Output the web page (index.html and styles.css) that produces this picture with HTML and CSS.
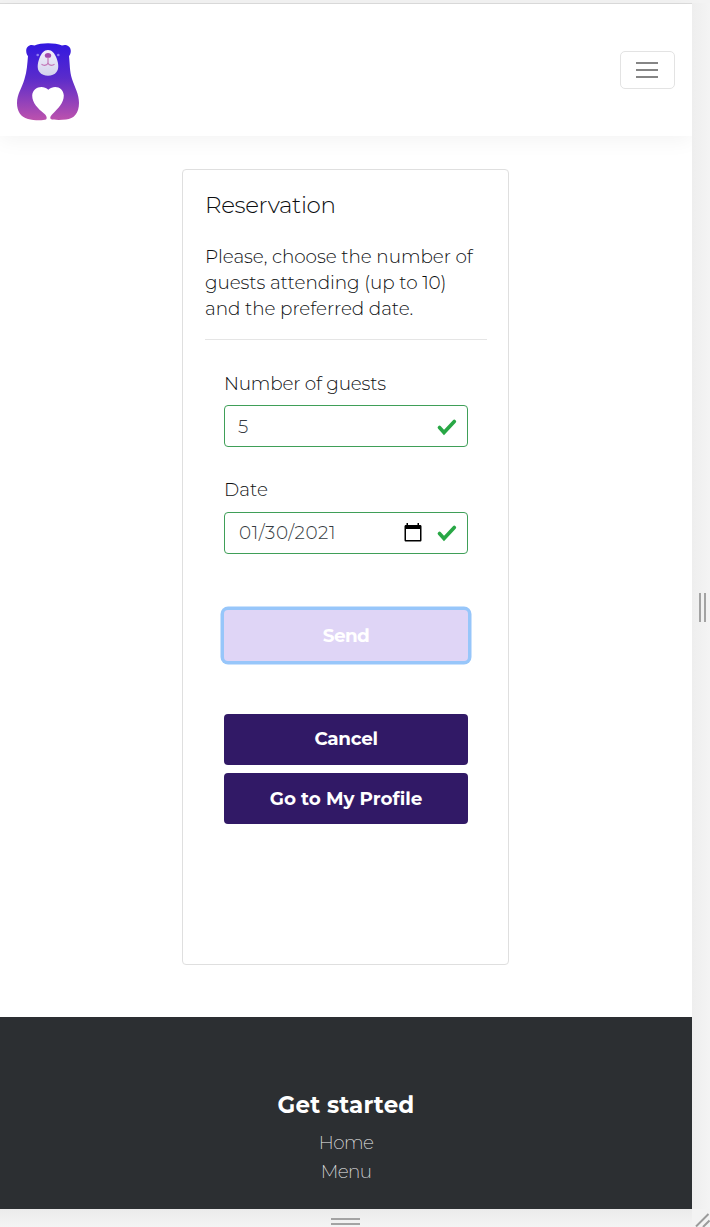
FILE: index.html
```
<!DOCTYPE html>
<html lang="en">
<head>
<meta charset="utf-8">
<title>Reservation</title>
<link rel="stylesheet" href="styles.css">
</head>
<body>
<div class="frame">
  <div class="screen">
    <header class="navbar">
      <svg class="logo" width="64" height="80" viewBox="0 0 64 80">
        <defs>
          <linearGradient id="fur" x1="0" y1="0" x2="0" y2="1">
            <stop offset="0" stop-color="#3218e0"/>
            <stop offset=".45" stop-color="#5a2bcb"/>
            <stop offset="1" stop-color="#bd52ad"/>
          </linearGradient>
          <linearGradient id="face" x1="0" y1="0" x2="0" y2="1">
            <stop offset="0" stop-color="#f2effb"/>
            <stop offset="1" stop-color="#d3d3ec"/>
          </linearGradient>
        </defs>
        <path fill="url(#fur)" d="M18.500 3.500C25 .4 39 .4 46 3.500C50.500 1.800 54.900 4.500 54.800 9C54.700 11.500 54 13 53 14C54 23 53.500 29 56 37C59 46 63 52 63 61C63 71 58 77 50 77.500C44 78.200 37 78 34.700 77C33.500 75.500 35 73.500 36.500 72C42 66.500 47.800 61 47.800 53.500C47.500 45.500 38.500 42 32.300 47.800C26.500 42 16.500 45.500 16.200 53.500C16.200 61 22 66.500 28 71.500C30.500 73.500 31.500 76 30 77.500C27 78.800 17 78.500 12 77C4.500 75 1 69 1 61C1 52 6 46 8.500 37C11 29 11.300 22 12 14C11 13 10.300 11.500 10.200 9C10.100 4.500 14 1.800 18.500 3.500Z"/>
        <path fill="url(#face)" d="M32 8C36 8 38.500 11 40.500 16C42.800 22 43 27 40.500 30C37 35 27 35 23.500 30C21 27 21.200 22 23.500 16C25.500 11 28 8 32 8Z"/>
        <ellipse cx="32" cy="13.500" rx="3.200" ry="2.500" fill="#a34aae"/>
        <path d="M32 15V20.500M25.500 22.300C28 24 31.500 23.500 32 20.500C32.500 23.500 36 24 38.500 22.300" fill="none" stroke="#c479b8" stroke-width="1.200"/>
        <circle cx="21.700" cy="13" r="1.300" fill="#8f80f0"/>
        <circle cx="42.300" cy="13" r="1.300" fill="#8f80f0"/>
      </svg>
      <button class="toggler" aria-label="Toggle navigation">
        <span class="toggler-bar"></span><span class="toggler-bar"></span><span class="toggler-bar"></span>
      </button>
    </header>
    <main class="content">
      <section class="card">
        <h1 class="card-title">Reservation</h1>
        <p class="card-text">Please, choose the number of<br>guests attending (up to 10)<br>and the preferred date.</p>
        <form class="form">
          <div class="field">
            <div class="label label-guests">Number of guests</div>
            <div class="control control-guests">
              <span class="value">5</span>
              <svg class="check" width="20" height="18" viewBox="0 0 20 18"><path d="M2.500 9.500L7 14.500L17.300 3.500" fill="none" stroke="#28a745" stroke-width="3.600" stroke-linecap="round"/></svg>
            </div>
          </div>
          <div class="field">
            <div class="label label-date">Date</div>
            <div class="control">
              <span class="value value-date">01/30/2021</span>
              <svg class="calendar" width="18" height="20" viewBox="0 0 18 20"><path fill="#000" fill-rule="evenodd" d="M2.500 0H4V2H13.500V0H15V2H16C17 2 17.500 2.500 17.500 3.500V17C17.500 18 17 18.500 16 18.500H2C1 18.500 .5 18 .5 17V3.500C.5 2.500 1 2 2 2H2.500ZM2 6V17H16V6Z"/></svg>
              <svg class="check" width="20" height="18" viewBox="0 0 20 18"><path d="M2.500 9.500L7 14.500L17.300 3.500" fill="none" stroke="#28a745" stroke-width="3.600" stroke-linecap="round"/></svg>
            </div>
          </div>
          <button type="button" class="btn btn-send">Send</button>
          <button type="button" class="btn btn-dark btn-cancel">Cancel</button>
          <button type="button" class="btn btn-dark btn-profile">Go to My Profile</button>
        </form>
      </section>
    </main>
    <footer class="footer">
      <h2 class="footer-title">Get started</h2>
      <a class="footer-link">Home</a>
      <a class="footer-link">Menu</a>
    </footer>
  </div>
  <div class="rail-right"><span class="grip grip-v"></span></div>
  <div class="rail-bottom"><span class="grip grip-h"></span></div>
  <div class="corner"><svg width="18" height="18" viewBox="0 0 18 18"><path d="M4 17.500L16.500 5M11 18L17.500 11.500" stroke="#9b9b9b" stroke-width="2" fill="none"/></svg></div>
</div>
</body>
</html>
```
FILE: styles.css
```
* { box-sizing: border-box; }
body {
  margin: 0;
  background: #f3f3f3;
  color: #0c0e10;
  font-family: Montserrat, Inter, "Open Sans", sans-serif;
  font-size: 18.400px;
  font-weight: 300;
}
.frame {
  display: grid;
  grid-template-columns: 692px 18px;
  grid-template-rows: 1206px 18px;
  height: 1227px;
  padding-top: 3px;
  overflow: hidden;
}
.screen {
  display: flex;
  flex-direction: column;
  background: #fff;
  border-top: 1px solid #dcdcdc;
}
.navbar {
  display: flex;
  justify-content: space-between;
  align-items: flex-start;
  height: 132px;
  padding: 38px 17px 0 16px;
  box-shadow: 0 4px 20px rgba(0, 0, 0, .05);
}
.logo { display: block; }
.toggler {
  display: flex;
  flex-direction: column;
  align-items: center;
  justify-content: center;
  gap: 5px;
  width: 55px;
  height: 38px;
  margin-top: 9px;
  padding: 0 1px 0 0;
  background: #fff;
  border: 1px solid #e3e3e3;
  border-radius: 5px;
}
.toggler-bar { width: 22px; height: 2px; background: #858585; }
.content { height: 881px; padding-top: 33px; }
.card {
  width: 327px;
  height: 796px;
  margin-left: 182px;
  padding: 20px 21px 0 22px;
  border: 1px solid #dfdfdf;
  border-radius: 4px;
}
.card-title {
  margin: 0;
  font-size: 23px;
  line-height: 30px;
  font-weight: 300;
  letter-spacing: -.350px;
}
.card-text {
  height: 96px;
  margin: 24px 0 0;
  line-height: 26px;
  letter-spacing: -.070px;
  white-space: nowrap;
  border-bottom: 1px solid #e5e5e5;
}
.form { display: flex; flex-direction: column; padding: 30px 19px 0 19px; }
.field { height: 106.500px; }
.label { height: 35px; line-height: 28px; }
.label-guests { letter-spacing: -.200px; }
.label-date { line-height: 26px; }
.control {
  display: flex;
  align-items: center;
  height: 42px;
  padding: 0 10px 0 13px;
  border: 1px solid #3f9f58;
  border-radius: 4px;
  color: #363b41;
}
.control-guests { padding-top: 2px; }
.value { flex: 1; line-height: 26px; }
.value-date { padding-left: 1px; letter-spacing: .540px; }
.calendar { margin-right: 15px; }
.btn {
  height: 51px;
  padding: 0;
  border: 0;
  border-radius: 4px;
  color: #fff;
  font: inherit;
  font-weight: 700;
}
.btn-send {
  margin: 27px 0 53px;
  background: #dfd5f6;
  box-shadow: 0 0 0 3.500px #97c6fa;
  letter-spacing: -.600px;
}
.btn-dark { margin-bottom: 8px; background: #311966; }
.btn-cancel { padding-bottom: 2px; letter-spacing: -.350px; }
.btn-profile { letter-spacing: -.040px; }
.footer {
  display: flex;
  flex-direction: column;
  align-items: center;
  height: 192px;
  padding-top: 72px;
  background: #2c2f32;
  color: #fff;
}
.footer-title {
  margin: 0 0 7px;
  font-size: 23px;
  line-height: 32px;
  font-weight: 700;
  letter-spacing: .160px;
}
.footer-link { font-weight: 200; line-height: 29px; letter-spacing: -.600px; color: #f2f2f2; }
.rail-right {
  display: flex;
  align-items: center;
  justify-content: center;
  background: linear-gradient(90deg, #eeeeee, #f4f4f4);
}
.rail-bottom {
  display: flex;
  align-items: center;
  justify-content: center;
  padding-top: 6px;
  background: linear-gradient(#ebebeb, #f4f4f4);
}
.grip { display: block; border: 0 solid #a3a3a3; }
.grip-v { width: 7px; height: 29px; margin: 2px 0 0 2px; border-width: 0 2px; }
.grip-h { width: 29px; height: 7px; margin-right: 2px; border-width: 2px 0; }
.corner svg { display: block; }
```
